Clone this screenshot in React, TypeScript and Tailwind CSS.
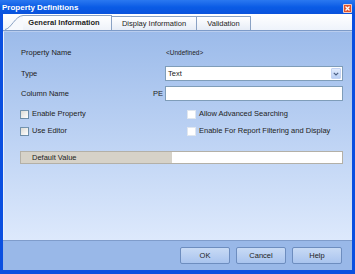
import React from "react";

const font = "font-['Liberation_Sans',Arial,sans-serif]";

const Checkbox: React.FC<{ label: string; disabled?: boolean }> = ({ label, disabled }) => (
  <div className="flex items-center gap-[3px] h-[10px]">
    <div
      className={
        disabled
          ? "w-[9px] h-[9px] bg-white border border-[#dfe6ef]"
          : "w-[9px] h-[9px] bg-gradient-to-br from-[#dcdcd6] to-white border border-[#1c5180]/60"
      }
    />
    <span className="text-[7.5px] text-[#222]">{label}</span>
  </div>
);

const Button: React.FC<{ label: string }> = ({ label }) => (
  <button className="w-[50px] h-[17px] rounded-[2px] border border-[#6d8dbf] bg-gradient-to-b from-[#c8daf5] to-[#a9c4ee] text-[7.5px] text-[#222]">
    {label}
  </button>
);

export default function App() {
  return (
    <div className={`w-[355px] h-[274px] flex flex-col bg-[#0a4fe0] ${font}`}>
      {/* title bar */}
      <div className="h-[14px] flex items-center justify-between pl-[2px] pr-[3px] bg-gradient-to-b from-[#2a78f0] via-[#0a5ce6] to-[#0a52dc]">
        <span className="text-[8px] font-bold text-white leading-none mt-[2px]">Property Definitions</span>
        <div className="w-[9px] h-[9px] mt-[3px] rounded-[1px] border border-white/70 bg-[#e0542c] flex items-center justify-center">
          <svg width="7" height="7" viewBox="0 0 7 7">
            <path d="M1.5 1.5 L5.5 5.5 M5.5 1.5 L1.5 5.5" stroke="white" strokeWidth="1.3" />
          </svg>
        </div>
      </div>

      <div className="flex-1 mx-[3px] mb-[4px] flex flex-col">
        {/* tab strip */}
        <div className="h-[17px] flex items-end bg-gradient-to-b from-white to-[#eef3fb] pl-[2px] border-b border-[#7d9bc8]">
          <div className="flex items-end h-[15px]">
            <svg width="18" height="15" viewBox="0 0 18 15" className="block">
              <path d="M0 15 C6 14 10 1 18 0.5 L18 15 Z" fill="#f7f9fd" />
              <path d="M0 14.5 C6 14 10 1 18 0.5" stroke="#8aa2c4" fill="none" strokeWidth="1" />
            </svg>
            <div className="h-[15px] w-[89px] flex items-center justify-center border-t border-r border-[#8aa2c4] bg-gradient-to-b from-white to-[#eef2f9] text-[7.5px] font-bold text-[#222]">
              <span className="mr-[6px]">General Information</span>
            </div>
          </div>
          <div className="h-[14px] w-[85px] flex items-center justify-center border-t border-r border-[#8aa2c4] bg-gradient-to-b from-white to-[#e6ecf6] text-[7.5px] text-[#222]">
            Display Information
          </div>
          <div className="h-[14px] w-[54px] flex items-center justify-center border-t border-r border-[#8aa2c4] bg-gradient-to-b from-white to-[#e6ecf6] text-[7.5px] text-[#222]">
            Validation
          </div>
        </div>

        {/* content */}
        <div className="flex-1 border-t border-[#b9cdee] border-l border-l-[#e8f0fc] bg-gradient-to-b from-[#9cbbea] to-[#dde9fc] pl-[17px] pr-[9px] pt-[14px]">
          <div className="grid grid-cols-[144px_1fr] items-center">
            <span className="text-[7.5px] text-[#222] h-[14px] leading-[14px]">Property Name</span>
            <span className="text-[6.5px] text-[#222] pl-[1px]">&lt;Undefined&gt;</span>
          </div>
          <div className="grid grid-cols-[144px_1fr] items-center mt-[6px]">
            <span className="text-[7.5px] text-[#222]">Type</span>
            <div className="h-[15px] bg-white border border-[#7f9db9] flex items-center justify-between pl-[2px] pr-[1px]">
              <span className="text-[7.5px] text-[#222]">Text</span>
              <div className="w-[10px] h-[11px] rounded-[1px] bg-gradient-to-b from-[#e3ecfd] to-[#b9cff5] border border-[#c3d3f3] flex items-center justify-center">
                <svg width="6" height="4" viewBox="0 0 6 4">
                  <path d="M0.8 0.8 L3 3 L5.2 0.8" stroke="#4d6185" strokeWidth="1.2" fill="none" />
                </svg>
              </div>
            </div>
          </div>
          <div className="grid grid-cols-[144px_1fr] items-center mt-[5px]">
            <div className="flex justify-between pr-[2px]">
              <span className="text-[7.5px] text-[#222]">Column Name</span>
              <span className="text-[7.5px] text-[#222]">PE</span>
            </div>
            <div className="h-[15px] bg-white border border-[#7f9db9]" />
          </div>
          <div className="grid grid-cols-[167px_1fr] -ml-[1px] mt-[8px] gap-y-[7px]">
            <Checkbox label="Enable Property" />
            <Checkbox label="Allow Advanced Searching" disabled />
            <Checkbox label="Use Editor" />
            <Checkbox label="Enable For Report Filtering and Display" disabled />
          </div>
          <div className="flex h-[13px] mt-[15px] -ml-[1px] border border-[#b3b0a7]">
            <div className="w-[151px] bg-[#d6d2c8] flex items-center pl-[11px] text-[7.5px] text-[#222]">
              Default Value
            </div>
            <div className="flex-1 bg-white" />
          </div>
        </div>

        {/* buttons */}
        <div className="h-[30px] bg-[#99b8e8] border-t border-[#7f9ccb] flex justify-end items-start gap-[6px] pt-[6px] pr-[10px]">
          <Button label="OK" />
          <Button label="Cancel" />
          <Button label="Help" />
        </div>
      </div>
    </div>
  );
}
